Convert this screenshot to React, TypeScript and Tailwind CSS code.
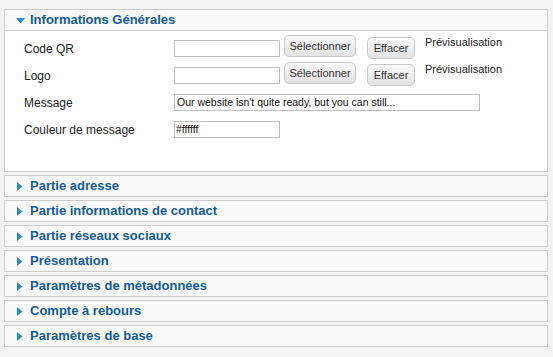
const sections = [
  'Partie adresse',
  'Partie informations de contact',
  'Partie réseaux sociaux',
  'Présentation',
  'Paramètres de métadonnées',
  'Compte à rebours',
  'Paramètres de base',
];

const font = { fontFamily: '"Liberation Sans", Arial, sans-serif' };

const Caret: React.FC<{ open?: boolean }> = ({ open }) =>
  open ? (
    <svg width="9" height="6" viewBox="0 0 9 6" className="mr-[5px] mt-[1px]">
      <path d="M0 0H9L4.5 5.5Z" fill="#2e8bc0" />
    </svg>
  ) : (
    <svg width="6" height="9" viewBox="0 0 6 9" className="mr-[7px]">
      <path d="M0 0V9L5.5 4.5Z" fill="#2e8bc0" />
    </svg>
  );

const Button: React.FC<{ label: string; w: string }> = ({ label, w }) => (
  <button
    className={`h-[22px] ${w} rounded-[5px] border border-[#c8c8c8] bg-gradient-to-b from-[#fafafa] to-[#e2e2e2] text-[11px] text-[#333]`}
  >
    {label}
  </button>
);

const FileRow: React.FC<{ label: string }> = ({ label }) => (
  <div className="flex items-start h-[22px]">
    <div className="w-[150px] mt-[7px] text-[12px] leading-[14px] text-[#222]">{label}</div>
    <div className="mt-[5px] h-[17px] w-[106px] border border-[#bfbfbf] bg-white" />
    <div className="ml-[4px] flex">
      <Button label="Sélectionner" w="w-[72px]" />
      <div className="ml-[11px]">
        <Button label="Effacer" w="w-[48px]" />
      </div>
    </div>
    <div className="ml-[10px] mt-[1px] text-[11px] leading-[13px] text-[#222]">Prévisualisation</div>
  </div>
);

export default function App() {
  return (
    <div className="min-h-[357px] w-[553px] bg-[#f3f3f3] pt-[9px] pl-[4px]" style={font}>
      <div className="w-[544px] border border-[#cccccc] bg-white mb-[3px]">
        <div className="flex items-center h-[21px] pl-[11px] bg-[#f9f9f9] border-b border-[#cccccc]">
          <Caret open />
          <span className="text-[13px] font-bold text-[#135c96]">Informations Générales</span>
        </div>
        <div className="h-[140px] pl-[19px] pt-[4px]">
          <FileRow label="Code QR" />
          <div className="mt-[5px]">
            <FileRow label="Logo" />
          </div>
          <div className="flex items-start h-[20px] mt-[9px]">
            <div className="w-[150px] mt-[3px] text-[12px] leading-[14px] text-[#222]">Message</div>
            <div className="mt-[1px] h-[17px] w-[306px] border border-[#bfbfbf] bg-white pl-[2px] text-[10.5px] leading-[15px] text-[#111] overflow-hidden whitespace-nowrap">
              Our website isn&apos;t quite ready, but you can still...
            </div>
          </div>
          <div className="flex items-start h-[20px] mt-[7px]">
            <div className="w-[150px] mt-[3px] text-[12px] leading-[14px] text-[#222]">Couleur de message</div>
            <div className="mt-[1px] h-[17px] w-[106px] border border-[#bfbfbf] bg-white pl-[1px] text-[10.5px] leading-[15px] text-[#111]">
              #ffffff
            </div>
          </div>
        </div>
      </div>
      {sections.map((s) => (
        <div
          key={s}
          className="w-[544px] h-[22px] mb-[3px] flex items-center pl-[12px] border border-[#cccccc] bg-[#f9f9f9]"
        >
          <Caret />
          <span className="text-[13px] font-bold text-[#135c96]">{s}</span>
        </div>
      ))}
    </div>
  );
}
